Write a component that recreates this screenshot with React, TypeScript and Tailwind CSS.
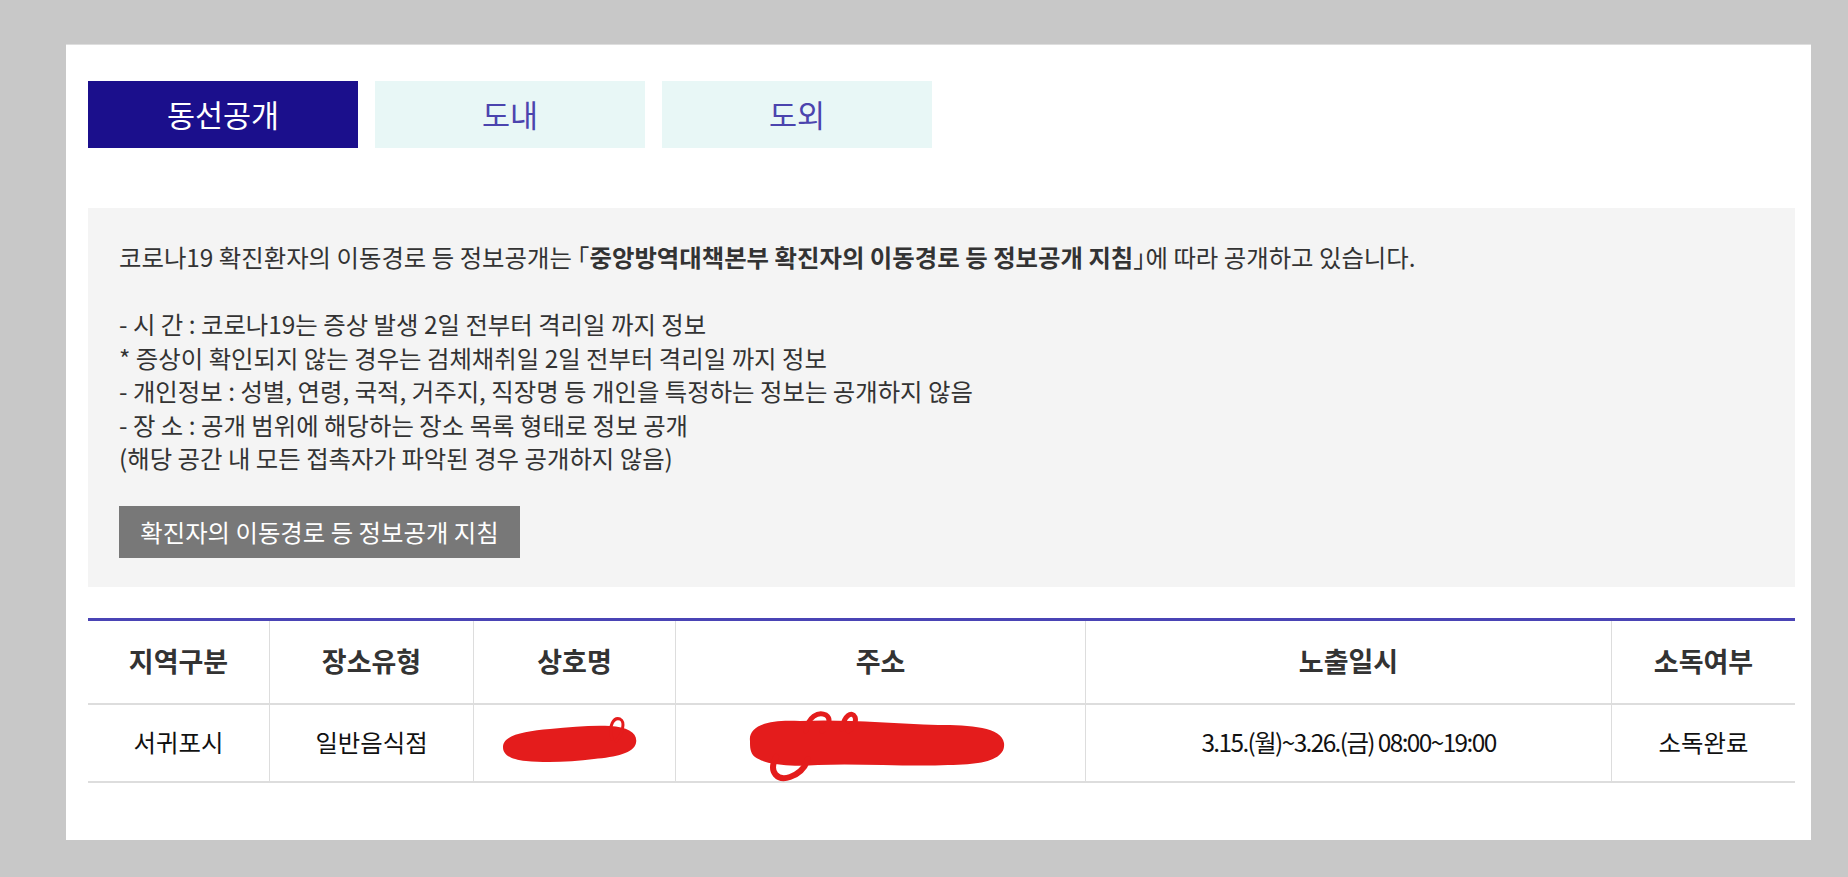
import React from 'react'

const tabs = ['동선공개', '도내', '도외']

const rules = [
    '- 시 간 : 코로나19는 증상 발생 2일 전부터 격리일 까지 정보',
    '* 증상이 확인되지 않는 경우는 검체채취일 2일 전부터 격리일 까지 정보',
    '- 개인정보 : 성별, 연령, 국적, 거주지, 직장명 등 개인을 특정하는 정보는 공개하지 않음',
    '- 장 소 : 공개 범위에 해당하는 장소 목록 형태로 정보 공개',
    '(해당 공간 내 모든 접촉자가 파악된 경우 공개하지 않음)',
]

const headers = ['지역구분', '장소유형', '상호명', '주소', '노출일시', '소독여부']

// red marker over the shop name
const ScribbleName = () => (
    <svg className="absolute left-[26px] top-[10px]" width="142" height="52" viewBox="0 0 142 52">
        <path
            d="M3 32 C3 20 25 16 50 14 C72 12 92 10 110 11 C128 12 138 18 136 28 C134 38 116 42 94 44 C72 47 46 48 26 46 C10 44 3 40 3 32 Z"
            fill="#e41c1c"
        />
        <path d="M112 24 C108 10 114 2 120 4 C126 7 122 20 116 26" stroke="#e41c1c" strokeWidth="3" fill="none" strokeLinecap="round" />
    </svg>
)

// red marker over the address
const ScribbleAddress = () => (
    <svg className="absolute left-[72px] top-[4px]" width="260" height="74" viewBox="0 0 260 74">
        <path
            d="M2 32 C0 16 22 10 52 12 C92 10 142 14 190 16 C222 16 254 18 256 34 C258 50 236 56 200 56 C160 58 110 54 70 56 C44 58 18 56 7 48 C2 44 2 38 2 32 Z"
            fill="#e41c1c"
        />
        <path d="M28 48 C20 64 30 72 42 68 C54 64 58 56 60 50" stroke="#e41c1c" strokeWidth="6" fill="none" strokeLinecap="round" />
        <path
            d="M58 22 C60 8 70 2 78 6 C84 10 80 18 74 22 M94 20 C96 6 104 2 107 8 C109 14 104 20 100 22"
            stroke="#e41c1c"
            strokeWidth="5"
            fill="none"
            strokeLinecap="round"
        />
    </svg>
)

const App = () => {
    return (
        <div className="min-h-screen bg-[#c8c8c8] pt-[44px] pl-[66px] pr-[37px] pb-[37px] font-['Noto_Sans_CJK_KR','Noto_Sans',sans-serif]">
            <div className="bg-white border-t border-[#dedede] pt-[36px] pl-[22px] pr-[16px] pb-[57px]">
                {/* Tabs */}
                <div className="flex gap-[17px]">
                    {tabs.map((tab, i) => (
                        <button
                            key={tab}
                            className={`w-[270px] h-[67px] flex items-center justify-center text-[30.5px] ${i === 0
                                    ? 'bg-[#1b0f8c] text-white'
                                    : 'bg-[#e8f7f6] text-[#4b44ae]'
                                }`}
                        >
                            {tab}
                        </button>
                    ))}
                </div>

                {/* Notice */}
                <div className="mt-[60px] bg-[#f4f4f4] pt-[32px] pl-[31px] pb-[29px] text-[24.4px] leading-[33.5px] text-[#333]">
                    <p>
                        코로나19 확진환자의 이동경로 등 정보공개는 <span className="[font-feature-settings:'halt']">「</span>
                        <b className="font-bold">중앙방역대책본부 확진자의 이동경로 등 정보공개 지침</b>
                        <span className="[font-feature-settings:'halt']">」</span>에 따라 공개하고 있습니다.
                    </p>
                    <div className="mt-[33.5px]">
                        {rules.map((line) => (
                            <p key={line}>{line}</p>
                        ))}
                    </div>
                    <button className="mt-[31px] w-[401px] h-[52px] bg-[#787878] text-white text-[24.4px] flex items-center justify-center">
                        확진자의 이동경로 등 정보공개 지침
                    </button>
                </div>

                {/* Table */}
                <div className="mt-[31px] border-t-[3px] border-[#4a44b5]">
                    <div className="grid grid-cols-[181px_204px_202px_410px_526px_184px] border-b-2 border-[#dddddd]">
                        {headers.map((h, i) => (
                            <div
                                key={h}
                                className={`h-[82px] flex items-center justify-center text-[27px] font-bold text-[#333] ${i > 0 ? 'border-l border-[#dddddd]' : ''}`}
                            >
                                {h}
                            </div>
                        ))}
                    </div>
                    <div className="grid grid-cols-[181px_204px_202px_410px_526px_184px] border-b-2 border-[#dddddd] text-[24.4px] text-[#111]">
                        <div className="h-[76px] flex items-center justify-center">서귀포시</div>
                        <div className="h-[76px] flex items-center justify-center border-l border-[#dddddd]">일반음식점</div>
                        <div className="relative h-[76px] border-l border-[#dddddd]">
                            <ScribbleName />
                        </div>
                        <div className="relative h-[76px] border-l border-[#dddddd]">
                            <ScribbleAddress />
                        </div>
                        <div className="h-[76px] flex items-center justify-center border-l border-[#dddddd] tracking-[-1.6px]">
                            3.15.(월)~3.26.(금) 08:00~19:00
                        </div>
                        <div className="h-[76px] flex items-center justify-center border-l border-[#dddddd]">소독완료</div>
                    </div>
                </div>
            </div>
        </div>
    )
}

export default App
